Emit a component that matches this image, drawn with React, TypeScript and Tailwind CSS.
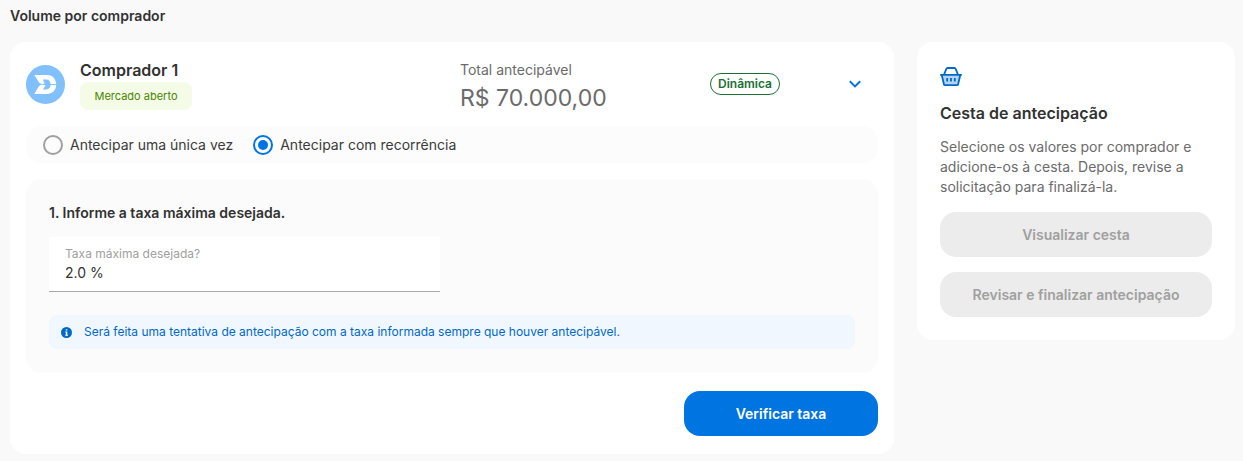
import { useState } from "react";

function BuyerLogo() {
  return (
    <svg viewBox="0 0 39 39" className="size-[39px] shrink-0" aria-hidden="true">
      <circle cx="19.5" cy="19.5" r="19.5" fill="#80c0ff" />
      <path
        d="M8.3 10H21C26.4 10 29.8 13.4 30.2 18.9H24.6C24.2 16.1 22.7 14.6 20.2 14.6H16.8L18.6 18.6L16 19.4L13 17.4Z"
        fill="#fff"
      />
      <path
        d="M14.2 19.9H19.6L17 24.4H20.2C22.7 24.4 24.2 22.9 24.6 20H30.2C29.8 25.5 26.4 28.9 21 28.9H8.3L12.2 22.3Z"
        fill="#fff"
      />
    </svg>
  );
}

function BasketIcon() {
  return (
    <svg viewBox="0 0 22 20" className="h-5 w-[22px]" fill="none" aria-hidden="true">
      <path d="M1.8 9H20.2L17.7 19H4.3Z" fill="#b3d4f5" />
      <path
        d="M0.2 8.8H21.8M1.8 9.2L3.9 18.2Q4.1 19.1 5.1 19.1H16.9Q17.9 19.1 18.1 18.2L20.2 9.2M4.2 8.2L6.3 3Q6.7 2 7.6 2H14.4Q15.3 2 15.7 3L17.8 8.2"
        stroke="#0069c8"
        strokeWidth="1.8"
      />
      <path d="M7.2 12V15.5M11 12V15.5M14.8 12V15.5" stroke="#0069c8" strokeWidth="1.8" />
    </svg>
  );
}

function InfoIcon() {
  return (
    <svg viewBox="0 0 11 11" className="size-[11px] shrink-0" aria-hidden="true">
      <circle cx="5.5" cy="5.5" r="5.5" fill="#0069c8" />
      <path d="M4.8 2.2H6.3V3.6H4.8ZM4.3 4.5H6.3V7.8H7V8.8H4.2V7.8H4.8V5.4H4.3Z" fill="#fff" />
    </svg>
  );
}

type RadioOptionProps = {
  label: string;
  checked: boolean;
  onChange: () => void;
};

function RadioOption({ label, checked, onChange }: RadioOptionProps) {
  return (
    <label className="flex items-center gap-[7px] text-sm text-[#3b3b3b]">
      <input
        type="radio"
        name="mode"
        checked={checked}
        onChange={onChange}
        className="grid size-5 shrink-0 appearance-none place-content-center rounded-full border-2 border-[#a0a0a0] before:size-[10px] before:rounded-full checked:border-[#0074e0] checked:before:bg-[#0074e0]"
      />
      {label}
    </label>
  );
}

export default function App() {
  const [recurring, setRecurring] = useState(true);
  const [rate, setRate] = useState("2.0 %");

  return (
    <div className="min-h-screen bg-[#f9f9f9] pt-[6px] pr-2 pb-[6px] pl-[10px] font-['Inter',sans-serif] text-[#323232]">
      <h1 className="text-sm leading-5 font-semibold">Volume por comprador</h1>

      <div className="mt-4 grid grid-cols-[minmax(0,1fr)_318px] items-start gap-[23px]">
        <main className="rounded-2xl bg-white p-4 pb-[18px]">
          <header className="mb-4 flex h-[52px] items-center">
            <div className="flex flex-1 items-center gap-[15px]">
              <BuyerLogo />
              <div>
                <h2 className="text-base leading-6 font-semibold">Comprador 1</h2>
                <span className="flex h-7 w-28 items-center justify-center rounded-lg bg-[#f4fce8] text-[11px] text-[#4a8500]">
                  Mercado aberto
                </span>
              </div>
            </div>
            <div className="flex flex-1 items-center justify-between pl-4">
              <div className="pt-1 text-[#6b6b6b]">
                <p className="text-sm leading-6">Total antecipável</p>
                <p className="text-[23px] leading-8">R$ 70.000,00</p>
              </div>
              <div className="flex items-center gap-[68px] pr-4">
                <span className="flex h-[22px] items-center rounded-full border border-[#1a7035] px-[7px] text-xs font-semibold text-[#1a7035]">
                  Dinâmica
                </span>
                <button type="button" aria-label="Recolher comprador">
                  <svg viewBox="0 0 14 14" className="size-[14px]" fill="none" aria-hidden="true">
                    <path d="M1.8 4.3L7 9.4L12.2 4.3" stroke="#0074e0" strokeWidth="2" />
                  </svg>
                </button>
              </div>
            </div>
          </header>

          <div role="radiogroup" aria-label="Tipo de antecipação" className="flex h-[37px] items-center gap-5 rounded-2xl bg-[#fcfcfc] px-[17px]">
            <RadioOption label="Antecipar uma única vez" checked={!recurring} onChange={() => setRecurring(false)} />
            <RadioOption label="Antecipar com recorrência" checked={recurring} onChange={() => setRecurring(true)} />
          </div>

          <section className="mt-4 rounded-2xl bg-[#fbfbfb] p-6 px-[23px]">
            <h3 className="text-sm leading-5 font-semibold">1. Informe a taxa máxima desejada.</h3>
            <div className="mt-[14px] max-w-[391px] border-b border-[#a8a8a8] bg-white px-4 pt-2 pb-2">
              <label htmlFor="rate" className="block text-xs leading-[18px] text-[#a0a0a0]">
                Taxa máxima desejada?
              </label>
              <input
                id="rate"
                value={rate}
                onChange={(event) => setRate(event.target.value)}
                className="block w-full bg-transparent text-sm leading-5 outline-none"
              />
            </div>
            <p className="mt-[23px] flex h-[34px] items-center gap-3 rounded-lg bg-[#f1f7ff] px-3 text-xs text-[#0069c8]">
              <InfoIcon />
              Será feita uma tentativa de antecipação com a taxa informada sempre que houver antecipável.
            </p>
          </section>

          <div className="mt-[18px] flex justify-end">
            <button type="button" className="h-[45px] w-[194px] rounded-2xl bg-[#0074e0] text-sm font-semibold text-white">
              Verificar taxa
            </button>
          </div>
        </main>

        <aside className="rounded-2xl bg-white p-6 px-[23px] pb-[23px]">
          <BasketIcon />
          <h2 className="mt-[15px] text-base leading-6 font-semibold">Cesta de antecipação</h2>
          <p className="mt-3 text-sm leading-5 text-[#6b6b6b]">
            Selecione os valores por comprador e adicione-os à cesta. Depois, revise a solicitação para finalizá-la.
          </p>
          <div className="mt-[15px] flex flex-col gap-[15px]">
            <button type="button" disabled className="h-[45px] rounded-2xl bg-[#ececec] text-sm font-semibold text-[#a0a0a0]">
              Visualizar cesta
            </button>
            <button type="button" disabled className="h-[45px] rounded-2xl bg-[#ececec] text-sm font-semibold text-[#a0a0a0]">
              Revisar e finalizar antecipação
            </button>
          </div>
        </aside>
      </div>
    </div>
  );
}
